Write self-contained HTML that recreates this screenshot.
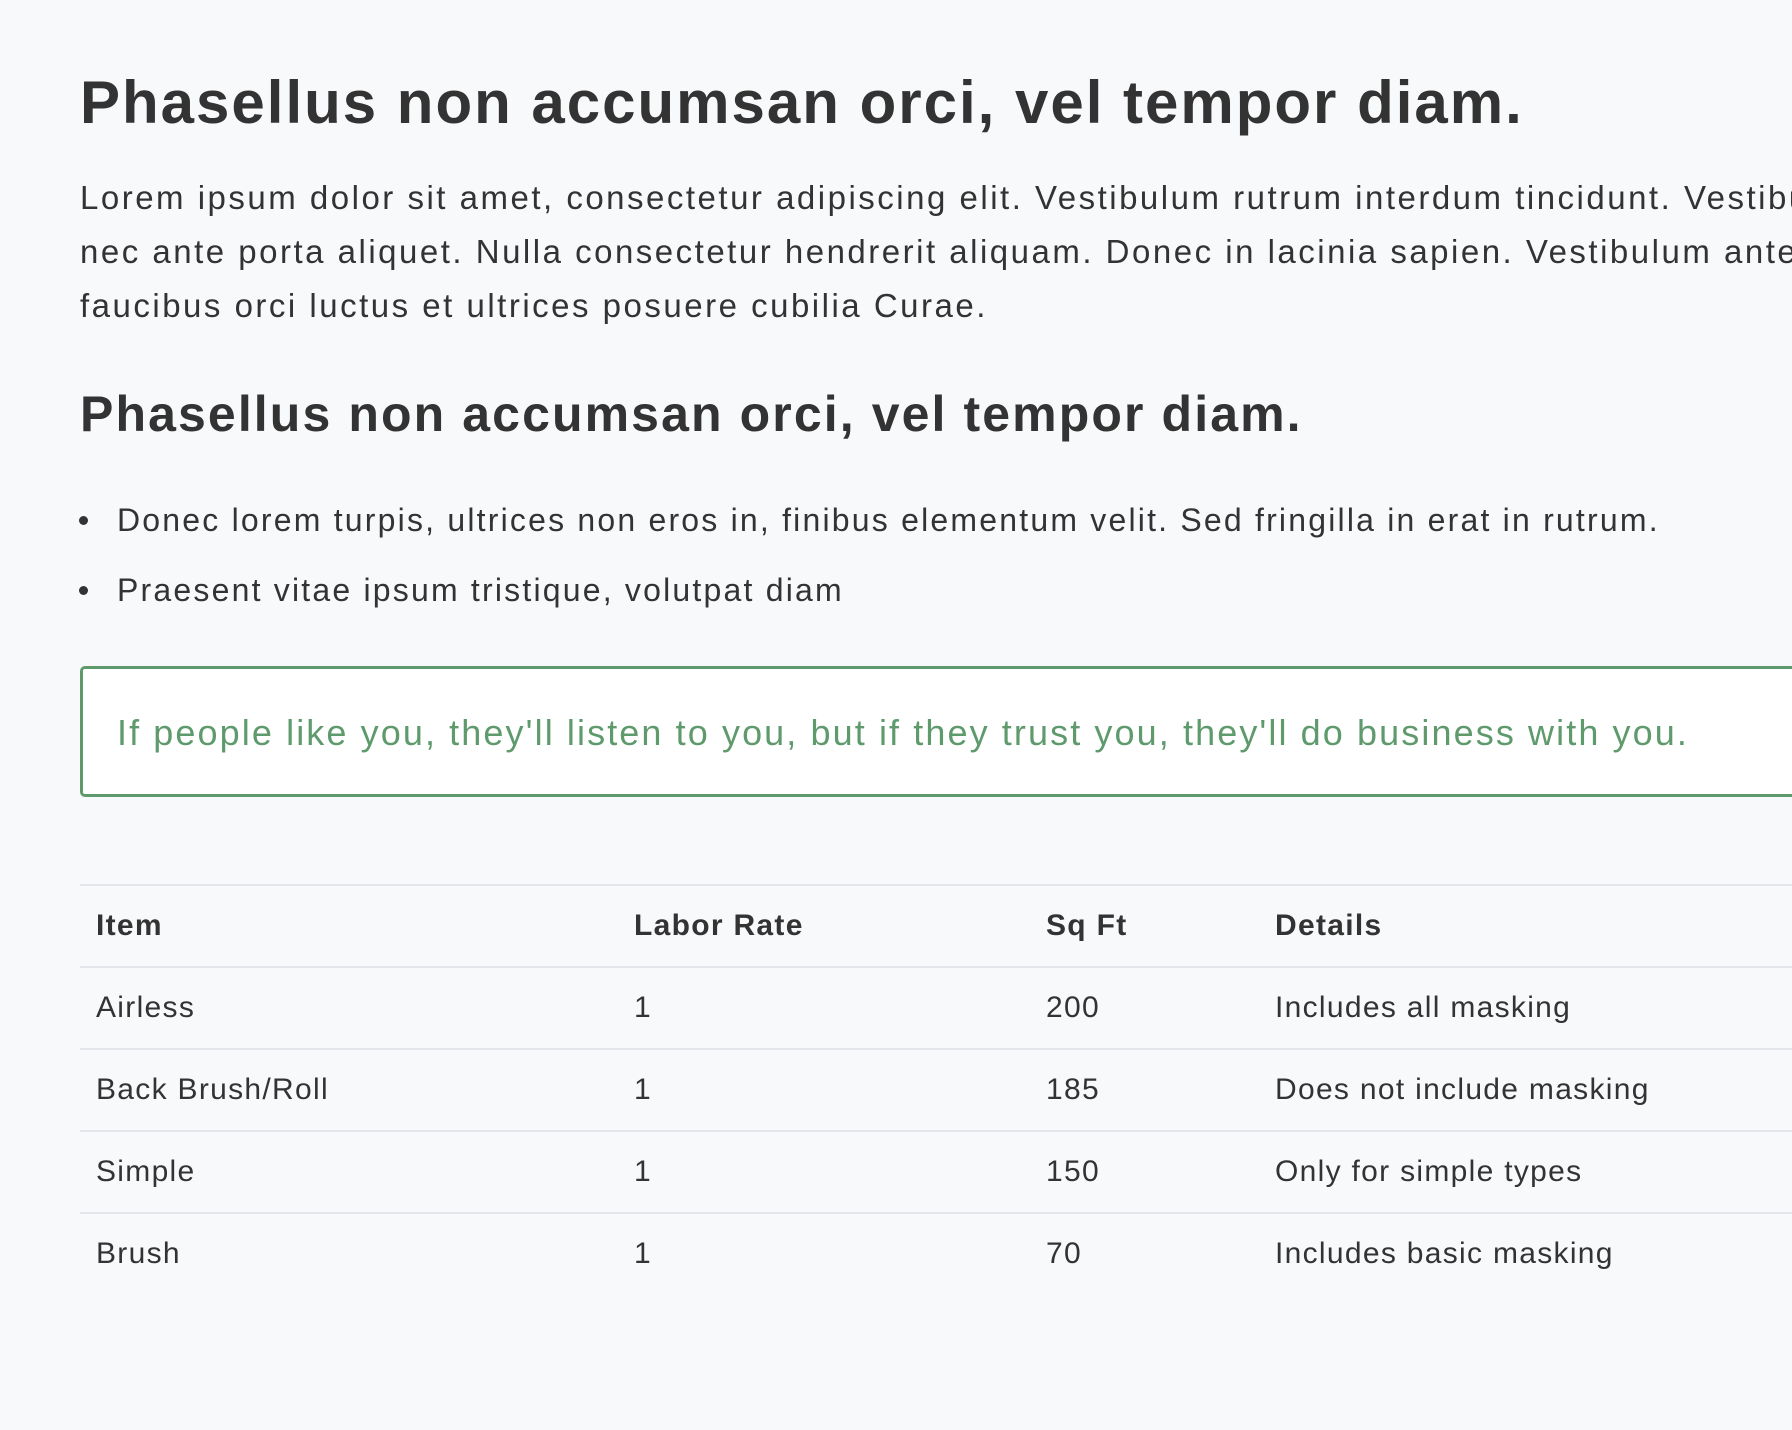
<!DOCTYPE html>
<html><head><meta charset="utf-8"><style>
html,body{margin:0;padding:0;background:#f8f9fb;width:1792px;height:1430px;overflow:hidden}
body{font-family:"Liberation Sans",sans-serif;color:#333;position:relative}
.a{position:absolute;white-space:nowrap;left:80px}
</style></head><body>
<div class="a" style="top:68px;font-size:60px;letter-spacing:2px;font-weight:bold;line-height:70px">Phasellus non accumsan orci, vel tempor diam.</div>
<div class="a" style="top:171px;font-size:33px;letter-spacing:2.5px;line-height:54px">Lorem ipsum dolor sit amet, consectetur adipiscing elit. Vestibulum rutrum interdum tincidunt. Vestibulum<br>nec ante porta aliquet. Nulla consectetur hendrerit aliquam. Donec in lacinia sapien. Vestibulum ante ipsum<br>faucibus orci luctus et ultrices posuere cubilia Curae.</div>
<div class="a" style="top:385px;font-size:50px;letter-spacing:2.1px;font-weight:bold;line-height:58px">Phasellus non accumsan orci, vel tempor diam.</div>
<div class="a" style="top:500px;left:117px;font-size:32px;letter-spacing:2.2px;line-height:40px">Donec lorem turpis, ultrices non eros in, finibus elementum velit. Sed fringilla in erat in rutrum.</div>
<div class="a" style="top:570px;left:117px;font-size:32px;letter-spacing:2.2px;line-height:40px">Praesent vitae ipsum tristique, volutpat diam</div>
<div style="position:absolute;left:79px;top:516px;width:9px;height:9px;border-radius:50%;background:#333"></div>
<div style="position:absolute;left:79px;top:586px;width:9px;height:9px;border-radius:50%;background:#333"></div>
<div style="position:absolute;left:80px;top:666px;width:1760px;height:125px;border:3px solid #5f9a6d;border-radius:5px;background:#fff"></div>
<div class="a" style="top:712px;left:117px;font-size:36px;letter-spacing:2.1px;line-height:42px;color:#5f9a6d">If people like you, they'll listen to you, but if they trust you, they'll do business with you.</div>
<div style="position:absolute;left:80px;right:0;top:884px;height:2px;background:#e3e5ea"></div>
<div style="position:absolute;left:80px;right:0;top:966px;height:2px;background:#e3e5ea"></div>
<div style="position:absolute;left:80px;right:0;top:1048px;height:2px;background:#e3e5ea"></div>
<div style="position:absolute;left:80px;right:0;top:1130px;height:2px;background:#e3e5ea"></div>
<div style="position:absolute;left:80px;right:0;top:1212px;height:2px;background:#e3e5ea"></div>
<div style="position:absolute;top:908px;left:0;font-size:30px;letter-spacing:1.3px;line-height:36px;font-weight:bold">
<span class="a" style="left:96px">Item</span><span class="a" style="left:634px">Labor Rate</span><span class="a" style="left:1046px">Sq Ft</span><span class="a" style="left:1275px">Details</span></div>
<div style="position:absolute;top:990px;left:0;font-size:30px;letter-spacing:1.3px;line-height:36px">
<span class="a" style="left:96px">Airless</span><span class="a" style="left:634px">1</span><span class="a" style="left:1046px">200</span><span class="a" style="left:1275px">Includes all masking</span></div>
<div style="position:absolute;top:1072px;left:0;font-size:30px;letter-spacing:1.3px;line-height:36px">
<span class="a" style="left:96px">Back Brush/Roll</span><span class="a" style="left:634px">1</span><span class="a" style="left:1046px">185</span><span class="a" style="left:1275px">Does not include masking</span></div>
<div style="position:absolute;top:1154px;left:0;font-size:30px;letter-spacing:1.3px;line-height:36px">
<span class="a" style="left:96px">Simple</span><span class="a" style="left:634px">1</span><span class="a" style="left:1046px">150</span><span class="a" style="left:1275px">Only for simple types</span></div>
<div style="position:absolute;top:1236px;left:0;font-size:30px;letter-spacing:1.3px;line-height:36px">
<span class="a" style="left:96px">Brush</span><span class="a" style="left:634px">1</span><span class="a" style="left:1046px">70</span><span class="a" style="left:1275px">Includes basic masking</span></div>
</body></html>
